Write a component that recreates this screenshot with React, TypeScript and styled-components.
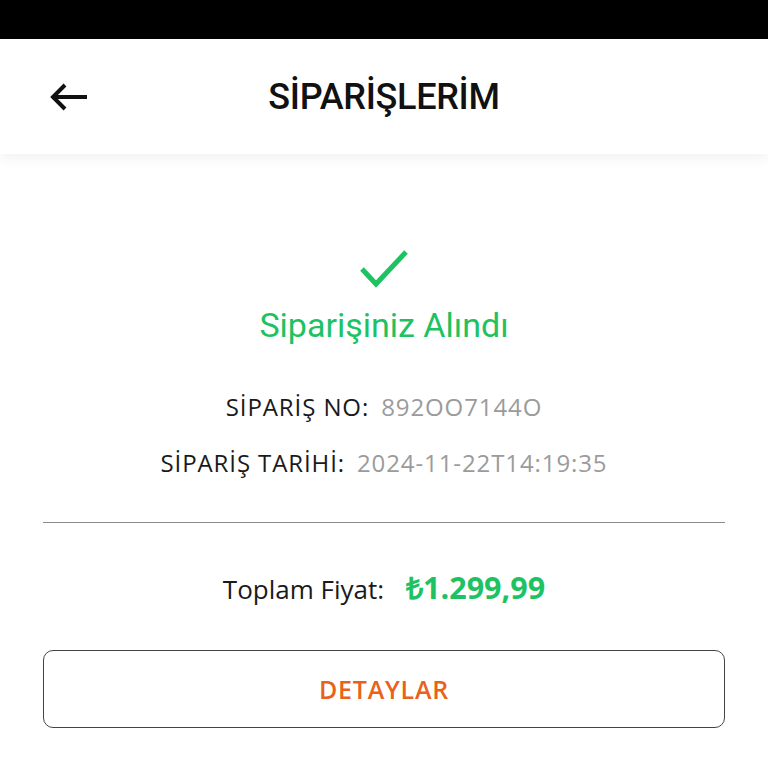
import React from "react";
import styled, { createGlobalStyle } from "styled-components";

const GlobalStyle = createGlobalStyle`
  html, body {
    margin: 0;
    padding: 0;
    background: #ffffff;
  }
  body {
    font-family: "Open Sans", "Liberation Sans", sans-serif;
  }
`;

const Screen = styled.div`
  width: 768px;
  height: 768px;
  display: flex;
  flex-direction: column;
  background: #ffffff;
  overflow: hidden;
`;

const StatusBar = styled.div`
  height: 39px;
  background: #000000;
  flex-shrink: 0;
`;

const Header = styled.header`
  height: 115px;
  display: flex;
  align-items: center;
  position: relative;
  background: #ffffff;
  box-shadow: 0 4px 12px rgba(0, 0, 0, 0.06);
  z-index: 1;
  flex-shrink: 0;
`;

const BackButton = styled.button`
  position: absolute;
  left: 46px;
  top: 50%;
  transform: translateY(-50%);
  width: 46px;
  height: 46px;
  padding: 0;
  border: none;
  background: none;
  display: flex;
  align-items: center;
  justify-content: center;
`;

const Title = styled.h1`
  flex: 1;
  margin: 0;
  text-align: center;
  font-family: "Roboto", sans-serif;
  font-weight: 500;
  font-size: 36px;
  color: #111111;
  letter-spacing: -0.3px;
`;

const Content = styled.main`
  display: flex;
  flex-direction: column;
  align-items: center;
  padding: 92px 43px 0;
`;

const CheckIcon = styled.svg`
  width: 60px;
  height: 46px;
`;

const Success = styled.div`
  margin-top: 13px;
  font-family: "Roboto", sans-serif;
  font-size: 34px;
  color: #1ec262;
`;

const InfoList = styled.div`
  margin-top: 45px;
  display: flex;
  flex-direction: column;
  align-items: center;
  gap: 22px;
`;

const InfoRow = styled.div`
  display: flex;
  align-items: baseline;
  gap: 12px;
  font-family: "Open Sans", sans-serif;
  font-size: 24px;
  line-height: 34px;
  letter-spacing: 0.9px;
`;

const InfoLabel = styled.span`
  color: #1a1a1a;
`;

const InfoValue = styled.span`
  color: #9b9b9b;
`;

const Divider = styled.hr`
  align-self: stretch;
  margin: 42px 0 0;
  border: none;
  border-top: 1px solid #8a8a8a;
`;

const TotalRow = styled.div`
  margin-top: 43px;
  display: flex;
  align-items: baseline;
  gap: 22px;
  font-family: "Open Sans", sans-serif;
  font-size: 26px;
`;

const TotalLabel = styled.span`
  color: #1a1a1a;
`;

const TotalValue = styled.span`
  color: #1ec262;
  font-weight: 700;
  font-size: 30.5px;
`;

const DetailButton = styled.button`
  margin-top: 42px;
  align-self: stretch;
  height: 78px;
  border: 1.5px solid #444444;
  border-radius: 10px;
  background: #ffffff;
  font-family: "Open Sans", sans-serif;
  font-weight: 600;
  font-size: 25px;
  letter-spacing: 0.8px;
  color: #e8621c;
`;

export default function App() {
  return (
    <>
      <GlobalStyle />
      <Screen>
        <StatusBar />
        <Header>
          <BackButton aria-label="Geri">
            <svg width="40" height="30" viewBox="0 0 40 30">
              <path
                d="M38 15H5M16 3L4 15l12 12"
                fill="none"
                stroke="#111"
                strokeWidth="4"
              />
            </svg>
          </BackButton>
          <Title>SİPARİŞLERİM</Title>
        </Header>
        <Content>
          <CheckIcon viewBox="0 0 60 46">
            <path
              d="M8 23L22 38L52 6"
              fill="none"
              stroke="#1ec262"
              strokeWidth="5"
            />
          </CheckIcon>
          <Success>Siparişiniz Alındı</Success>
          <InfoList>
            <InfoRow>
              <InfoLabel>SİPARİŞ NO:</InfoLabel>
              <InfoValue>892OO7144O</InfoValue>
            </InfoRow>
            <InfoRow>
              <InfoLabel>SİPARİŞ TARİHİ:</InfoLabel>
              <InfoValue>2024-11-22T14:19:35</InfoValue>
            </InfoRow>
          </InfoList>
          <Divider />
          <TotalRow>
            <TotalLabel>Toplam Fiyat:</TotalLabel>
            <TotalValue>₺1.299,99</TotalValue>
          </TotalRow>
          <DetailButton>DETAYLAR</DetailButton>
        </Content>
      </Screen>
    </>
  );
}
